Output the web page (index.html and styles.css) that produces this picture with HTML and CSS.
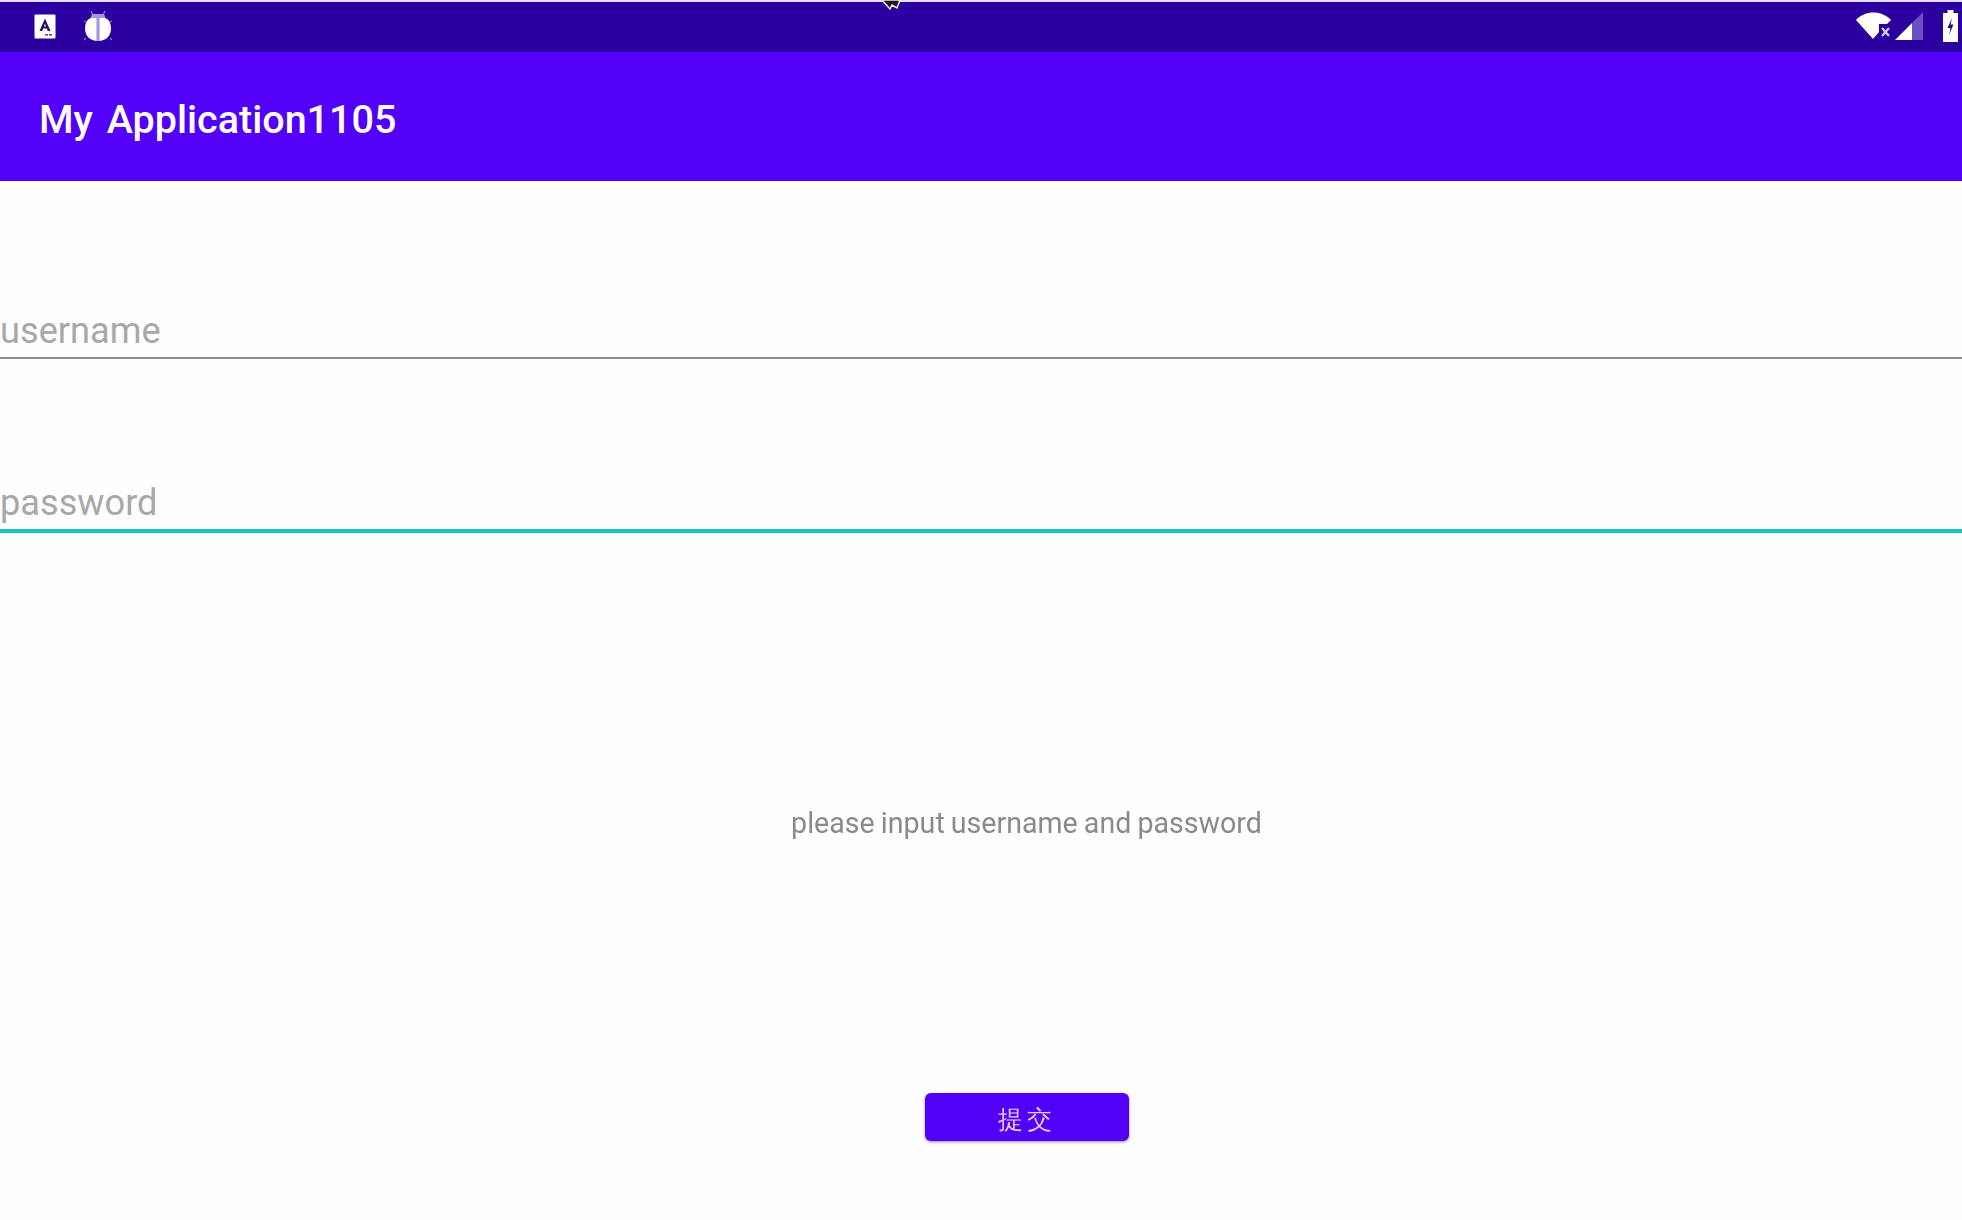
FILE: index.html
```html
<!DOCTYPE html>
<html lang="en">
<head>
    <meta charset="UTF-8">
    <meta name="viewport" content="width=device-width, initial-scale=1.0">
    <title>My Application1105</title>
    <link rel="stylesheet" href="styles.css">
</head>
<body>
    <div class="status-bar">
        <div class="status-left">
            <svg class="icon-a" width="22" height="25" viewBox="0 0 22 25">
                <rect x="0.5" y="0.5" width="21" height="24" rx="1" fill="#fff"/>
                <path d="M11 4.5 L16.5 17 H13.8 L12.8 14.5 H9.2 L8.2 17 H5.5 Z M10 12.4 H12 L11 9.5 Z" fill="#2c0a63" fill-rule="evenodd"/>
                <rect x="11" y="20" width="3" height="1.6" fill="#5a4a90"/>
                <rect x="15" y="20" width="3" height="1.6" fill="#5a4a90"/>
            </svg>
            <svg class="icon-bug" width="30" height="32" viewBox="0 0 30 32">
                <path d="M8 1 L10 5 M22 1 L20 5 M3 12 L1 11 M27 12 L29 11 M3 28 L1 30 M27 28 L29 30" stroke="#8f7bd0" stroke-width="1.200" fill="none"/>
                <path d="M9 4 H21 L22.500 8 H7.500 Z" fill="#a797dd"/>
                <path d="M13.800 8 V31 C6.500 30.500 2 25.500 2 18.500 C2 13 4.500 9 8 8 Z" fill="#fff"/>
                <path d="M16.200 8 V31 C23.500 30.500 28 25.500 28 18.500 C28 13 25.500 9 22 8 Z" fill="#fff"/>
                <rect x="13.800" y="8" width="2.400" height="23" fill="#a797dd"/>
            </svg>
        </div>
        <div class="status-right">
            <svg class="icon-wifi" width="36" height="28" viewBox="0 0 36 28">
                <path d="M0 8 C9 -2 26 -2 35 8 L31 12 H23 V20 L17 27 Z" fill="#fff"/>
                <path d="M26 16 L33 24 M33 16 L26 24" stroke="#cfc6ee" stroke-width="2.400"/>
            </svg>
            <svg class="icon-signal" width="28" height="28" viewBox="0 0 28 28">
                <path d="M28 0 V28 H17 V11 Z" fill="#6a4fc0"/>
                <path d="M17 11 V28 H0 Z" fill="#fff"/>
            </svg>
            <svg class="icon-battery" width="15" height="32" viewBox="0 0 15 32">
                <path d="M4.500 0 H10.500 V3 H15 V32 H0 V3 H4.500 Z" fill="#fff"/>
                <path d="M9 8 L4.500 18 H7.500 L6 25 L10.500 14.500 H7.500 Z" fill="#2c0a63"/>
            </svg>
        </div>
    </div>

    <svg class="cursor" width="20" height="10" viewBox="0 0 20 10">
        <path d="M1 0 L9 9 L11 5 L16 8 L19 0 Z" fill="#1b1433" stroke="#f2efc8" stroke-width="1.500"/>
    </svg>

    <div class="app-bar">My Application1105</div>

    <div class="content">
        <div class="field field-user">username</div>
        <div class="field field-pass">password</div>
        <div class="message">please input username and password</div>
        <button type="button" class="submit">提交</button>
    </div>
</body>
</html>
```

FILE: styles.css
```css
html, body {
    margin: 0;
    height: 100%;
}
body {
    background-color: #fefefe;
    font-family: Roboto, "Noto Sans CJK SC", sans-serif;
    overflow: hidden;
}
.status-bar {
    display: flex;
    justify-content: space-between;
    align-items: center;
    box-sizing: border-box;
    height: 52px;
    border-top: 2px solid #e4dff2;
    background-color: #2c009e;
    padding: 0 4px 2px 34px;
}
.status-left {
    display: flex;
    align-items: center;
    gap: 27px;
}
.status-right {
    display: flex;
    align-items: center;
}
.icon-signal {
    margin-left: 3px;
}
.icon-battery {
    margin-left: 20px;
}
.cursor {
    position: absolute;
    top: 0;
    left: 881px;
}
.app-bar {
    display: flex;
    align-items: center;
    box-sizing: border-box;
    height: 129px;
    padding: 5px 0 0 39px;
    background-color: #5200f7;
    color: #fff;
    font-size: 39.500px;
    font-weight: 500;
    word-spacing: 4px;
}
.content {
    display: flex;
    flex-direction: column;
    align-items: flex-start;
}
.field {
    box-sizing: border-box;
    width: 100%;
    height: 50px;
    color: #a8a8a8;
    font-size: 36.200px;
}
.field-user {
    margin-top: 128px;
    border-bottom: 2px solid #8e8e8e;
    line-height: 44px;
}
.field-pass {
    margin-top: 124px;
    border-bottom: 4px solid #14c4c4;
    line-height: 40px;
}
.message {
    align-self: center;
    margin-top: 270px;
    margin-left: 91px;
    color: #8a8a8a;
    font-size: 28.600px;
    word-spacing: -1px;
    line-height: 40px;
    filter: blur(0.6px);
}
.submit {
    align-self: center;
    width: 204px;
    height: 48px;
    margin-top: 250px;
    margin-left: 92px;
    padding: 4px 0 0;
    border: none;
    border-radius: 6px;
    background-color: #5200f7;
    box-shadow: 0 1px 3px rgba(60,0,160,0.5);
    color: #e6ccff;
    font-size: 25px;
    letter-spacing: 4px;
    filter: blur(0.5px);
}
```
